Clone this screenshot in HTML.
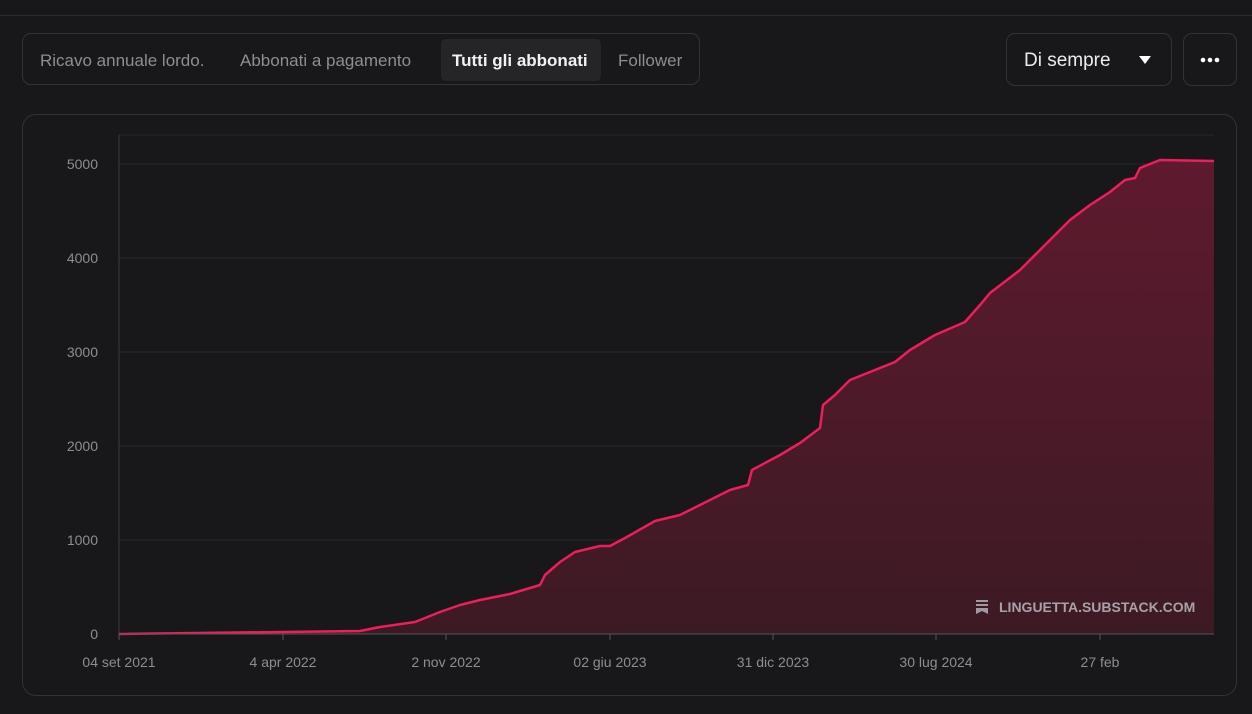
<!DOCTYPE html><html><head><meta charset="utf-8"><style>
body{margin:0;width:1252px;height:714px;background:#18181a;font-family:"Liberation Sans",sans-serif;overflow:hidden;position:relative}
.top{position:absolute;left:0;top:0;width:1252px;height:15px;border-bottom:1px solid #2c2c2f}
.tabs{position:absolute;left:22px;top:33px;width:678px;height:52px;border:1px solid #333336;border-radius:9px;box-sizing:border-box}
.tab{position:absolute;top:20px;font-size:17px;color:#8e8e92}
.act{position:absolute;left:418px;top:5px;width:160px;height:42px;background:#252527;border-radius:5px}
.btn{position:absolute;top:33px;height:53px;border:1px solid #333336;border-radius:9px;box-sizing:border-box}
.card{position:absolute;left:22px;top:114px;width:1215px;height:582px;border:1px solid #333336;border-radius:14px;box-sizing:border-box}
</style></head><body>
<div class="top"></div>
<div class="tabs"><div class="act"></div>
<span class="tab" style="left:17px;top:17px">Ricavo annuale lordo.</span>
<span class="tab" style="left:217px;top:17px">Abbonati a pagamento</span>
<span class="tab" style="left:429px;top:17px;color:#f2f2f2;font-weight:bold">Tutti gli abbonati</span>
<span class="tab" style="left:595px;top:17px">Follower</span></div>
<div class="btn" style="left:1006px;width:166px"><span style="position:absolute;left:17px;top:16px;font-size:19px;color:#ececec">Di sempre</span></div>
<div class="btn" style="left:1183px;width:54px"></div>
<div class="card"></div>
<svg style="position:absolute;left:0;top:0" width="1252" height="714">
<path d="M1139,56h12l-6,8z" fill="#fff"/>
<circle cx="1203" cy="60" r="2.3" fill="#fff"/><circle cx="1210" cy="60" r="2.3" fill="#fff"/><circle cx="1217" cy="60" r="2.3" fill="#fff"/>
<defs><linearGradient id="g" x1="0" y1="0" x2="0" y2="1"><stop offset="0" stop-color="#5e1a2e"/><stop offset="1" stop-color="#3c1a24"/></linearGradient></defs>
<g stroke="#29292c" stroke-width="1">
<line x1="119" y1="135" x2="1214" y2="135"/><line x1="119" y1="164" x2="1214" y2="164"/><line x1="119" y1="258" x2="1214" y2="258"/><line x1="119" y1="352" x2="1214" y2="352"/><line x1="119" y1="446" x2="1214" y2="446"/><line x1="119" y1="540" x2="1214" y2="540"/></g>
<line x1="119" y1="135" x2="119" y2="634" stroke="#3a3a3d"/>
<path d="M119,634 L360,631 380,627 415,622 440,612 460,605 480,600 510,594 540,585 545,575 560,562 575,552 600,546 610,546 625,538 655,521 680,515 700,505 730,490 748,485 752,470 780,455 800,443 820,428 823,405 835,395 850,380 870,372 895,362 910,350 935,335 965,322 980,305 990,293 1020,270 1045,245 1070,220 1090,205 1110,192 1125,180 1135,178 1140,168 1160,160 1214,161 L1214,634 Z" fill="url(#g)"/>
<path d="M119,634 L360,631 380,627 415,622 440,612 460,605 480,600 510,594 540,585 545,575 560,562 575,552 600,546 610,546 625,538 655,521 680,515 700,505 730,490 748,485 752,470 780,455 800,443 820,428 823,405 835,395 850,380 870,372 895,362 910,350 935,335 965,322 980,305 990,293 1020,270 1045,245 1070,220 1090,205 1110,192 1125,180 1135,178 1140,168 1160,160 1214,161" fill="none" stroke="#ef1d5a" stroke-width="2.5" stroke-linejoin="round"/>
<line x1="119" y1="634" x2="1214" y2="634" stroke="#555"/>
<g stroke="#555"><line x1="119" y1="634" x2="119" y2="640"/><line x1="283" y1="634" x2="283" y2="640"/><line x1="446" y1="634" x2="446" y2="640"/><line x1="610" y1="634" x2="610" y2="640"/><line x1="773" y1="634" x2="773" y2="640"/><line x1="936" y1="634" x2="936" y2="640"/><line x1="1100" y1="634" x2="1100" y2="640"/></g>
<g fill="#8e8e92" font-size="14" font-family="Liberation Sans" text-anchor="end">
<text x="98" y="169">5000</text><text x="98" y="263">4000</text><text x="98" y="357">3000</text><text x="98" y="451">2000</text><text x="98" y="545">1000</text><text x="98" y="639">0</text></g>
<g fill="#8e8e92" font-size="14" font-family="Liberation Sans" text-anchor="middle">
<text x="119" y="667">04 set 2021</text><text x="283" y="667">4 apr 2022</text><text x="446" y="667">2 nov 2022</text><text x="610" y="667">02 giu 2023</text><text x="773" y="667">31 dic 2023</text><text x="936" y="667">30 lug 2024</text><text x="1100" y="667">27 feb</text></g>
<path d="M976,600h12v2h-12zM976,604h12v2h-12zM976,608h12v6l-6,-3l-6,3z" fill="#a09aa0"/>
<text x="999" y="612" fill="#a8a2a8" font-size="14" font-weight="bold" font-family="Liberation Sans">LINGUETTA.SUBSTACK.COM</text>
</svg>
</body></html>
